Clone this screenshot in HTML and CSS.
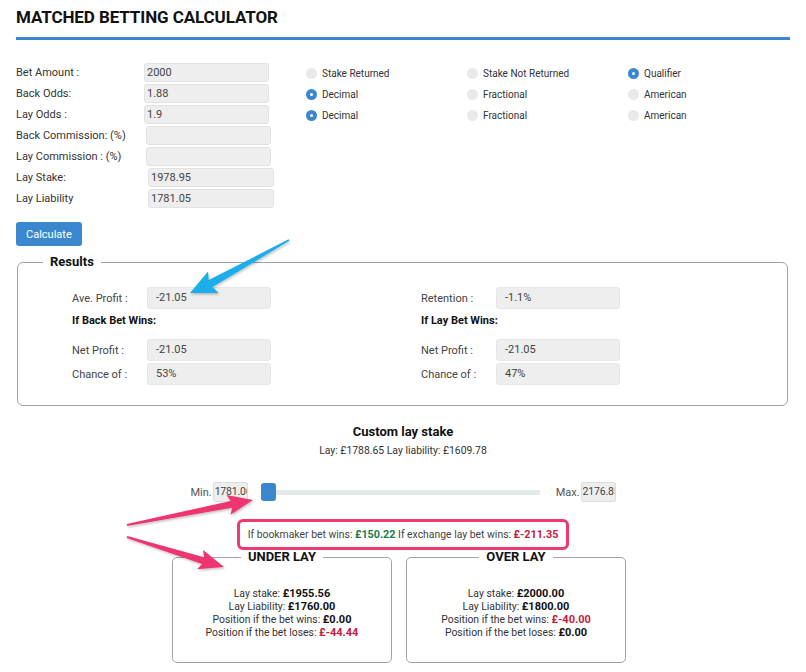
FILE: index.html
```html
<!DOCTYPE html>
<html>
<head>
<meta charset="utf-8">
<title>Matched Betting Calculator</title>
<link rel="stylesheet" href="styles.css">
</head>
<body>
<div class="page">
  <h1 class="title">MATCHED BETTING CALCULATOR</h1>
  <div class="rule"></div>

  <div class="top">
    <div class="fields">
      <div class="frow"><span class="flabel">Bet Amount :</span><span class="field">2000</span></div>
      <div class="frow"><span class="flabel">Back Odds:</span><span class="field">1.88</span></div>
      <div class="frow"><span class="flabel">Lay Odds :</span><span class="field">1.9</span></div>
      <div class="frow"><span class="flabel">Back Commission: (%)</span><span class="field shift2"></span></div>
      <div class="frow"><span class="flabel">Lay Commission : (%)</span><span class="field shift2"></span></div>
      <div class="frow"><span class="flabel">Lay Stake:</span><span class="field shift4">1978.95</span></div>
      <div class="frow"><span class="flabel">Lay Liability</span><span class="field shift4">1781.05</span></div>
    </div>
    <div class="radios">
      <div class="radio"><span class="dot"></span>Stake Returned</div>
      <div class="radio"><span class="dot"></span>Stake Not Returned</div>
      <div class="radio"><span class="dot on"></span>Qualifier</div>
      <div class="radio"><span class="dot on"></span>Decimal</div>
      <div class="radio"><span class="dot"></span>Fractional</div>
      <div class="radio"><span class="dot"></span>American</div>
      <div class="radio"><span class="dot on"></span>Decimal</div>
      <div class="radio"><span class="dot"></span>Fractional</div>
      <div class="radio"><span class="dot"></span>American</div>
    </div>
  </div>

  <button class="calc">Calculate</button>

  <fieldset class="results">
    <legend class="rlegend">Results</legend>
    <div class="res">
      <div class="rcol">
        <div class="rrow"><span class="rlabel">Ave. Profit :</span><span class="rfield">-21.05</span></div>
        <div class="sub">If Back Bet Wins:</div>
        <div class="rrow"><span class="rlabel">Net Profit :</span><span class="rfield">-21.05</span></div>
        <div class="rrow"><span class="rlabel">Chance of :</span><span class="rfield">53%</span></div>
      </div>
      <div class="rcol">
        <div class="rrow"><span class="rlabel">Retention :</span><span class="rfield">-1.1%</span></div>
        <div class="sub">If Lay Bet Wins:</div>
        <div class="rrow"><span class="rlabel">Net Profit :</span><span class="rfield">-21.05</span></div>
        <div class="rrow"><span class="rlabel">Chance of :</span><span class="rfield">47%</span></div>
      </div>
    </div>
  </fieldset>

  <section class="custom">
    <h2 class="ctitle">Custom lay stake</h2>
    <div class="layinfo">Lay: £1788.65 Lay liability: £1609.78</div>
    <div class="slider-row">
      <span class="mm">Min.</span><span class="mmfield">1781.06</span>
      <div class="slider"><span class="handle"></span></div>
      <span class="mm mm-max">Max.</span><span class="mmfield">2176.85</span>
    </div>
    <div class="profit-wrap">
      <div class="profit">If bookmaker bet wins: <b class="green">£150.22</b> If exchange lay bet wins: <b class="red">£-211.35</b></div>
    </div>
    <div class="boxes">
      <fieldset class="laybox">
        <legend class="llegend">UNDER LAY</legend>
        <div>Lay stake: <b>£1955.56</b></div>
        <div>Lay Liability: <b>£1760.00</b></div>
        <div>Position if the bet wins: <b>£0.00</b></div>
        <div>Position if the bet loses: <b class="red">£-44.44</b></div>
      </fieldset>
      <fieldset class="laybox">
        <legend class="llegend">OVER LAY</legend>
        <div>Lay stake: <b>£2000.00</b></div>
        <div>Lay Liability: <b>£1800.00</b></div>
        <div>Position if the bet wins: <b class="red">£-40.00</b></div>
        <div>Position if the bet loses: <b>£0.00</b></div>
      </fieldset>
    </div>
  </section>
</div>

<svg class="annot" width="806" height="672" viewBox="0 0 806 672">
  <defs>
    <filter id="sh" x="-10%" y="-10%" width="130%" height="130%">
      <feDropShadow dx="1" dy="1.5" stdDeviation="1.2" flood-color="#000" flood-opacity="0.25"/>
    </filter>
  </defs>
  <polygon filter="url(#sh)" fill="#1badea" points="190,293 208,271.5 208.7,280.1 288.6,239.3 289.4,240.7 212.5,287.1 218.5,293"/>
  <polygon filter="url(#sh)" fill="#ef3570" points="253,500 226.5,495.1 230.7,500.9 126.8,524 127.2,526 232.1,507.7 230.5,514.7"/>
  <polygon filter="url(#sh)" fill="#ef3570" points="224,567 203.1,550 204,557.2 127.3,536 126.7,538 202,563.9 197.1,569.2"/>
</svg>
</body>
</html>
```

FILE: styles.css
```css
* { box-sizing: border-box; }

body {
  margin: 0;
  position: relative;
  background: #fff;
  color: #333;
  font-family: Roboto, "Liberation Sans", Arial, sans-serif;
  font-size: 11px;
}

.page { padding: 0 16px; }

.title {
  margin: 7px 0 0;
  font-size: 17px;
  line-height: 20px;
  font-weight: 700;
  color: #111;
  letter-spacing: -0.1px;
}

.rule {
  height: 3px;
  margin-top: 10px;
  background: #3a87cf;
}

/* top form */
.top {
  display: flex;
  margin-top: 23px;
}

.fields {
  width: 290px;
  display: flex;
  flex-direction: column;
  gap: 2px;
}

.frow {
  display: flex;
  align-items: center;
  height: 19px;
}

.flabel {
  width: 128px;
  font-size: 11px;
  color: #333;
}

.field {
  width: 125px;
  height: 19px;
  padding: 0 2px;
  background: #eee;
  border: 1px solid #e2e2e2;
  border-radius: 3px;
  font-size: 11px;
  line-height: 17px;
  color: #444;
}

.shift2 { margin-left: 2px; }
.shift4 { margin-left: 4px; width: 126px; }

.radios {
  display: grid;
  grid-template-columns: repeat(3, 161px);
  grid-auto-rows: 19px;
  row-gap: 2px;
  padding-top: 1px;
}

.radio {
  display: flex;
  align-items: center;
  gap: 5px;
  font-size: 10px;
  color: #333;
}

.dot {
  width: 11px;
  height: 11px;
  border-radius: 50%;
  background: #e9e9e9;
  flex: none;
  display: flex;
  align-items: center;
  justify-content: center;
}

.dot.on { background: #3a87cf; }
.dot.on::after {
  content: "";
  width: 3px;
  height: 3px;
  border-radius: 50%;
  background: #fff;
}

.calc {
  display: block;
  margin-top: 14px;
  height: 24px;
  padding: 0 10px;
  background: #3a87cf;
  color: #fff;
  border: 0;
  border-radius: 3px;
  font-family: Roboto, "Liberation Sans", Arial, sans-serif;
  font-size: 11px;
}

/* results */
.results {
  margin: 8px 2px 0 1px;
  padding: 0;
  border: 1px solid #a3a3a3;
  border-radius: 6px;
  min-width: 0;
}

.rlegend {
  margin-left: 25px;
  padding: 0 7px;
  font-size: 13px;
  line-height: 16px;
  font-weight: 700;
  color: #111;
}

.res {
  display: grid;
  grid-template-columns: 349px 1fr;
  padding: 17px 0 20px 54px;
}

.rcol {
  display: flex;
  flex-direction: column;
}

.rrow {
  display: flex;
  align-items: center;
  height: 22px;
}

.rrow + .rrow { margin-top: 2px; }

.rlabel {
  width: 75px;
  font-size: 11px;
  color: #444;
}

.rfield {
  width: 124px;
  height: 22px;
  padding: 0 8px;
  background: #eee;
  border: 1px solid #e6e6e6;
  border-radius: 3px;
  font-size: 11px;
  line-height: 20px;
  color: #444;
}

.sub {
  margin: 5px 0 12px;
  font-size: 11px;
  line-height: 13px;
  font-weight: 700;
  color: #111;
}

/* custom lay stake */
.custom {
  margin-top: 18px;
  text-align: center;
}

.ctitle {
  margin: 0;
  font-size: 13px;
  line-height: 16px;
  font-weight: 700;
  color: #111;
}

.layinfo {
  margin-top: 4px;
  font-size: 10.4px;
  line-height: 14px;
  color: #333;
}

.slider-row {
  display: flex;
  justify-content: center;
  align-items: center;
  height: 20px;
  margin-top: 24px;
}

.mm {
  font-size: 11px;
  color: #555;
  margin-right: 1px;
}

.mm-max { margin-left: 16px; }

.mmfield {
  width: 35px;
  height: 20px;
  overflow: hidden;
  white-space: nowrap;
  text-align: left;
  padding-left: 1px;
  background: #eee;
  border: 1px solid #ddd;
  border-radius: 2px;
  font-size: 10.5px;
  line-height: 18px;
  letter-spacing: -0.2px;
  color: #444;
}

.slider {
  width: 279px;
  height: 18px;
  margin-left: 13px;
  display: flex;
  align-items: center;
  background: linear-gradient(#e3eaea, #e3eaea) center / 100% 5px no-repeat;
}

.handle {
  width: 15px;
  height: 18px;
  border-radius: 3px;
  background: #3a87cf;
}

.profit-wrap { margin-top: 17px; }

.profit {
  display: inline-block;
  padding: 6px 8px;
  border: 3px solid #ee3a6e;
  border-radius: 6px;
  font-size: 10.4px;
  line-height: 13px;
  color: #444;
}

.profit b { font-size: 10.8px; }

.green { color: #1b7a4b; }
.red { color: #c4213c; }

.boxes {
  display: flex;
  justify-content: center;
  gap: 14px;
  padding-right: 8px;
  margin-top: -1px;
}

.laybox {
  width: 220px;
  margin: 0;
  padding: 22px 0 23px;
  border: 1px solid #a3a3a3;
  border-radius: 5px;
  min-width: 0;
  font-size: 10.4px;
  line-height: 13px;
  color: #333;
}

.laybox b { color: #111; font-size: 11px; }
.laybox b.red { color: #c4213c; }

.llegend {
  margin: 0 auto;
  padding: 0 7px;
  font-size: 13px;
  line-height: 16px;
  font-weight: 700;
  color: #111;
}

.annot {
  position: absolute;
  top: 0;
  left: 0;
  pointer-events: none;
}
```
